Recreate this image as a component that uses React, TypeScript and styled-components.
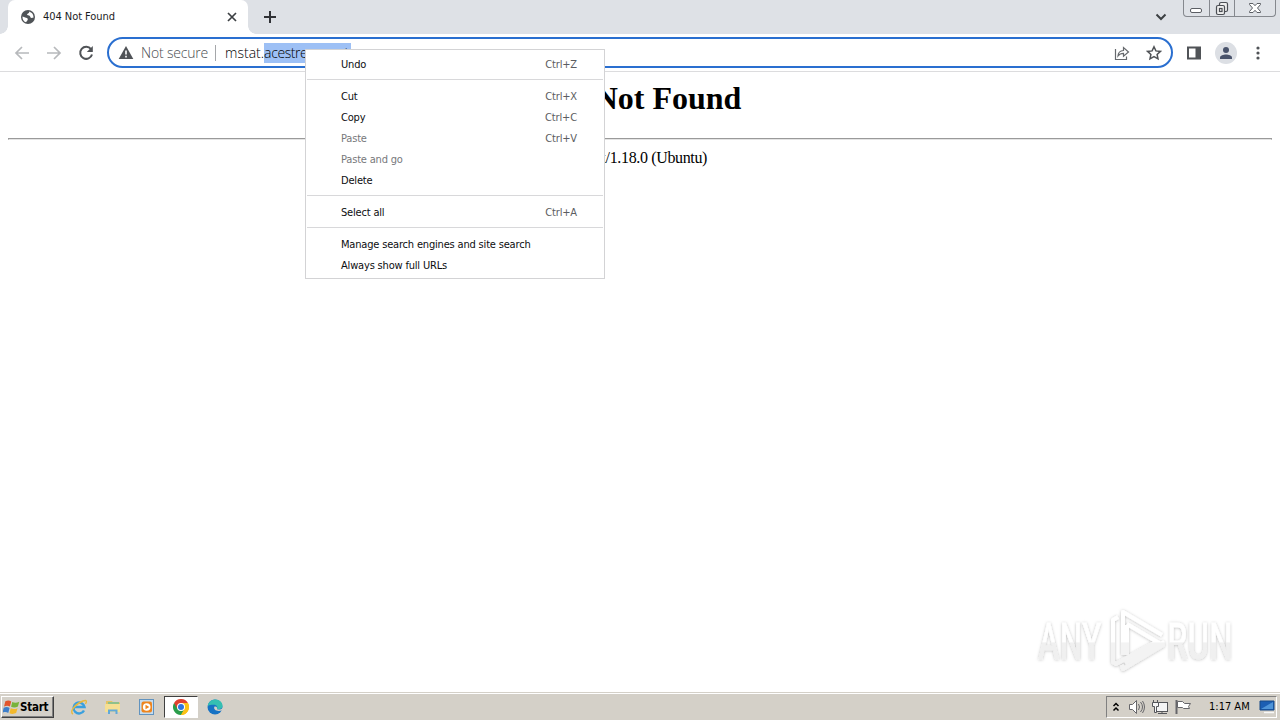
import React from 'react';
import styled, { createGlobalStyle } from 'styled-components';

const Global = createGlobalStyle`
  * { box-sizing: border-box; }
  html, body { margin: 0; padding: 0; }
  body { width: 1280px; height: 720px; overflow: hidden; background: #fff; }
  svg { display: block; flex: none; }
`;

const ui = `'DejaVu Sans Condensed', 'DejaVu Sans', sans-serif`;

const Desktop = styled.div`
  position: relative;
  display: flex;
  flex-direction: column;
  width: 1280px;
  height: 720px;
  overflow: hidden;
  font-family: ${ui};
  font-stretch: condensed;
  color: #1b1c1e;
`;

const TabStrip = styled.div`
  display: flex;
  align-items: flex-start;
  height: 34px;
  flex: none;
  padding-left: 8px;
  background: #dee1e6;
`;

const Tab = styled.div`
  position: relative;
  display: flex;
  align-items: center;
  width: 240px;
  height: 34px;
  padding: 0 10px 0 12px;
  background: #fff;
  border-radius: 7px 7px 0 0;
  &::before, &::after {
    content: '';
    position: absolute;
    bottom: 0;
    width: 8px;
    height: 8px;
  }
  &::before { left: -8px; background: radial-gradient(circle at 0 0, #dee1e6 7.5px, #fff 8px); }
  &::after { right: -8px; background: radial-gradient(circle at 100% 0, #dee1e6 7.5px, #fff 8px); }
`;

const Label = styled.span<{ $size?: number; $track?: number; $color?: string; $bold?: boolean }>`
  font-size: ${p => p.$size ?? 11}px;
  letter-spacing: ${p => p.$track ?? 0}px;
  color: ${p => p.$color ?? '#1b1c1e'};
  font-weight: ${p => (p.$bold ? 700 : 400)};
  line-height: 16px;
  white-space: nowrap;
`;

const TabTitle = styled(Label)`
  flex: 1;
  margin-left: 7px;
`;

const NewTab = styled.div`
  margin: 9px 0 0 14px;
`;

const TabSearch = styled.div`
  margin: 10px 15px 0 auto;
`;

const WindowButtons = styled.div`
  display: flex;
  width: 93px;
  height: 17px;
  margin-right: 4px;
  border: 1px solid #85888e;
  border-top: 0;
  border-radius: 0 0 4px 4px;
  background: #dfe2e7;
`;

const WindowButton = styled.div<{ $w: number }>`
  display: flex;
  justify-content: center;
  width: ${p => p.$w}px;
  & + & { border-left: 1px solid #85888e; }
`;

const Toolbar = styled.div`
  display: flex;
  align-items: center;
  height: 38px;
  flex: none;
  padding: 0 12px 0 12px;
  border-bottom: 1px solid #dcdcde;
  background: #fff;
`;

const NavGroup = styled.div`
  display: flex;
  gap: 12px;
  width: 95px;
`;

const Omnibox = styled.div`
  display: flex;
  align-items: center;
  width: 1066px;
  height: 31px;
  padding: 0 9px;
  border: 2px solid #2a6fd0;
  border-radius: 16px;
  background: #fff;
`;

const OmniText = styled.span<{ $color?: string; $track?: number }>`
  font-family: 'Open Sans', 'Noto Sans', sans-serif;
  font-weight: 300;
  font-stretch: normal;
  font-size: 14px;
  line-height: 20px;
  letter-spacing: ${p => p.$track ?? 0}px;
  color: ${p => p.$color ?? '#000'};
  white-space: nowrap;
`;

const Security = styled(OmniText)`
  margin-left: 7px;
`;

const Divider = styled.div`
  width: 1px;
  height: 16px;
  margin: 0 9px 0 7px;
  background: #a5a7aa;
`;

const Selection = styled(OmniText)`
  width: 87px;
  height: 20px;
  overflow: hidden;
  background: #9dc0f5;
`;

const OmniActions = styled.div`
  display: flex;
  gap: 16px;
  margin-left: auto;
`;

const RightActions = styled.div`
  display: flex;
  align-items: center;
  flex: 1;
  padding-left: 13px;
`;

const Avatar = styled.div`
  display: flex;
  align-items: center;
  justify-content: center;
  width: 22px;
  height: 22px;
  margin: 0 13px 0 13px;
  border-radius: 50%;
  background: #dcdfe4;
`;

const Page = styled.main`
  flex: 1;
  padding: 8px 8px 0;
  background: #fff;
  color: #000;
  font-family: 'Liberation Serif', 'Times New Roman', serif;
  font-size: 16px;
  text-align: center;
`;

const Heading = styled.h1`
  margin: 0 0 21px;
  font-size: 32px;
  line-height: 37px;
`;

const Rule = styled.hr`
  height: 2px;
  margin: 0 0 9px;
  border: 1px solid #9a9a9a;
  border-bottom-color: #e4e4e4;
`;

const Server = styled.div`
  padding-right: 2px;
  line-height: 18px;
  letter-spacing: -0.35px;
`;

const Menu = styled.div`
  position: absolute;
  left: 305px;
  top: 49px;
  width: 300px;
  height: 230px;
  padding: 4px 1px 0;
  border: 1px solid #d3d3d5;
  background: #fff;
`;

const MenuRow = styled.div`
  display: flex;
  align-items: center;
  justify-content: space-between;
  height: 21px;
  padding: 0 26px 0 34px;
`;

const MenuLine = styled.div`
  height: 1px;
  margin: 4px 0 6px;
  background: #d8d8da;
`;

const Watermark = styled.div`
  position: absolute;
  left: 1030px;
  top: 600px;
`;

const Taskbar = styled.footer`
  display: flex;
  align-items: center;
  height: 28px;
  flex: none;
  padding: 1px 3px 0 1px;
  border-top: 1px solid #d4d0c8;
  box-shadow: inset 0 1px #fff;
  background: #d4d0c8;
`;

const StartButton = styled.div`
  display: flex;
  align-items: center;
  width: 53px;
  height: 22px;
  padding-left: 1px;
  border: 1px solid;
  border-color: #fff #404040 #404040 #fff;
  box-shadow: inset -1px -1px #808080;
`;

const Launchers = styled.div`
  display: flex;
  align-items: center;
  margin-left: 8px;
`;

const Launcher = styled.div<{ $active?: boolean }>`
  display: flex;
  align-items: center;
  justify-content: center;
  width: 34px;
  height: 22px;
  background: ${p => (p.$active ? '#fff' : 'transparent')};
  border: 1px solid;
  border-color: ${p => (p.$active ? '#404040 #fff #fff #404040' : 'transparent')};
`;

const Tray = styled.div`
  display: flex;
  align-items: center;
  width: 171px;
  height: 22px;
  margin-left: auto;
  padding-left: 5px;
  border: 1px solid;
  border-color: #808080 #fff #fff #808080;
`;

const Clock = styled(Label)`
  margin: 0 9px 0 15px;
`;

type Item = { text: string; keys?: string; off?: boolean };
const groups: Item[][] = [
  [{ text: 'Undo', keys: 'Ctrl+Z' }],
  [
    { text: 'Cut', keys: 'Ctrl+X' },
    { text: 'Copy', keys: 'Ctrl+C' },
    { text: 'Paste', keys: 'Ctrl+V', off: true },
    { text: 'Paste and go', off: true },
    { text: 'Delete' },
  ],
  [{ text: 'Select all', keys: 'Ctrl+A' }],
  [{ text: 'Manage search engines and site search' }, { text: 'Always show full URLs' }],
];

const Globe = () => (
  <svg width="16" height="16" viewBox="0 0 16 16">
    <circle cx="8" cy="8" r="7" fill="#4f5357" />
    <path d="M2.5 7.5L6 8.8c1.600.3 2 1 1.700 2.200L6 13.300C3.500 12.500 2.200 10 2.500 7.500zM9 2.500c.6 1-.2 1.900-1.300 2.200-1 .3-.6 1.500.3 1.600 1.800.1 2.200 1 2.400 2 .5 1 1.600.4 3 .5.5-3-1.500-5.500-4.400-6.300z" fill="#fff" />
  </svg>
);

const Arrow = ({ flip }: { flip?: boolean }) => (
  <svg width="20" height="20" viewBox="0 0 20 20" fill="none" stroke="#b7b9bc" strokeWidth="1.7">
    <path d={flip ? 'M3 10h13M10 4l6 6-6 6' : 'M17 10H4M10 4l-6 6 6 6'} />
  </svg>
);

const Logo = () => (
  <svg width="220" height="84" viewBox="0 0 220 84">
    <defs>
      <linearGradient id="fade" gradientUnits="userSpaceOnUse" x1="0" y1="0" x2="0" y2="84">
        <stop offset=".5" stopColor="#fff" />
        <stop offset=".51" stopColor="#f3f3f3" />
      </linearGradient>
      <linearGradient id="fadeText" gradientUnits="userSpaceOnUse" x1="0" y1="-59" x2="0" y2="25">
        <stop offset=".5" stopColor="#fff" />
        <stop offset=".51" stopColor="#f0f0f0" />
      </linearGradient>
      <filter id="glow" x="-10%" y="-10%" width="120%" height="120%">
        <feDropShadow dx="0" dy="0.500" stdDeviation="1.800" floodColor="#000" floodOpacity=".27" />
      </filter>
    </defs>
    <g filter="url(#glow)">
      <g fontFamily="Roboto, sans-serif" fontWeight="400" fontSize="50" fill="url(#fadeText)" stroke="url(#fadeText)" strokeWidth=".5">
        <text transform="translate(8 59) scale(.64 1)" textLength="99" lengthAdjust="spacingAndGlyphs">ANY</text>
        <text transform="translate(137 59) scale(.64 1)" textLength="103" lengthAdjust="spacingAndGlyphs">RUN</text>
      </g>
      <g fill="none" stroke="url(#fade)" strokeWidth="4" strokeLinejoin="round">
        <path d="M88 17l-5 3v42l3 2 40-22" />
        <path d="M93 55V12l39 23" />
        <path d="M97 25v30M97 24l32 19-34 20M132 41l1 4-40 24-1-4" />
      </g>
    </g>
  </svg>
);

export default function App() {
  return (
    <>
      <Global />
      <Desktop>
        <TabStrip>
          <Tab>
            <Globe />
            <TabTitle $track={-0.05}>404 Not Found</TabTitle>
            <svg width="12" height="12" viewBox="0 0 12 12" stroke="#3c4043" strokeWidth="1.700"><path d="M2 2l8 8M10 2l-8 8" /></svg>
          </Tab>
          <NewTab>
            <svg width="16" height="16" viewBox="0 0 16 16" stroke="#303236" strokeWidth="2"><path d="M8 2v12M2 8h12" /></svg>
          </NewTab>
          <TabSearch>
            <svg width="14" height="14" viewBox="0 0 14 14" fill="none" stroke="#3c4043" strokeWidth="2"><path d="M2.500 4.500L7 9l4.500-4.500" /></svg>
          </TabSearch>
          <WindowButtons>
            <WindowButton $w={25}>
              <svg width="14" height="16" fill="#fff" stroke="#5b5e64"><rect x="1.500" y="8.500" width="11" height="4" rx="1.500" /></svg>
            </WindowButton>
            <WindowButton $w={26}>
              <svg width="14" height="16" fill="#eee" stroke="#4b4e54" strokeWidth="1.200"><rect x="4.500" y="2.500" width="8" height="9" rx="1.500" /><rect x="1.500" y="5.500" width="8" height="9" rx="1.500" /><rect x="4.500" y="8.500" width="2.500" height="3" /></svg>
            </WindowButton>
            <WindowButton $w={41}>
              <svg width="14" height="16" fill="#fff" stroke="#5b5e64"><path d="M1.500 3.500h3.500l2 2.200 2-2.200h3.500v1L9.500 8l3 3.500v1H9L7 10.300 5 12.500H1.500v-1l3-3.500-3-3.500z" /></svg>
            </WindowButton>
          </WindowButtons>
        </TabStrip>

        <Toolbar>
          <NavGroup>
            <Arrow />
            <Arrow flip />
            <svg width="20" height="20" viewBox="0 0 20 20" fill="none" stroke="#505357" strokeWidth="2"><path d="M15 6.200A6 6 0 1 0 16 11.500" /><path d="M16.800 3v6h-6z" fill="#505357" stroke="none" /></svg>
          </NavGroup>
          <Omnibox>
            <svg width="16" height="16" viewBox="0 0 16 16"><path d="M8 1l7.300 13H.7z" fill="#505357" /><path d="M8 5.500v4M8 10.800v1.700" stroke="#fff" strokeWidth="1.600" /></svg>
            <Security $color="#4a4d51" $track={-0.18}>Not secure</Security>
            <Divider />
            <OmniText>mstat.</OmniText>
            <Selection $track={-0.4}>acestream.net</Selection>
            <OmniActions>
              <svg width="16" height="16" viewBox="0 0 16 16" fill="none" stroke="#66696d" strokeWidth="1.200"><path d="M1.500 4v10.500h11v-3M4 11c.2-3.500 2-5.300 5.500-5.500V2.500L14.500 7l-5 4.300V8.400C7 8.400 5.300 9.200 4 11z" /></svg>
              <svg width="16" height="16" viewBox="0 0 16 16" fill="none" stroke="#505357" strokeWidth="1.500"><path d="M8 1.800l1.900 4.100 4.500.5-3.300 3 .9 4.400L8 11.600l-4 2.200.9-4.400-3.300-3 4.500-.5z" /></svg>
            </OmniActions>
          </Omnibox>
          <RightActions>
            <svg width="16" height="16" viewBox="0 0 16 16"><path d="M1 1.500h14v13H1z" fill="#505357" /><path d="M3 3.500h6.500v9H3z" fill="#fff" /></svg>
            <Avatar>
              <svg width="14" height="14" viewBox="0 0 14 14" fill="#49536b"><circle cx="7" cy="4" r="3" /><path d="M1 13v-1.500C1 9.500 4.500 8.500 7 8.500s6 1 6 3V13z" /></svg>
            </Avatar>
            <svg width="16" height="16" fill="#505357"><circle cx="8" cy="3" r="1.600" /><circle cx="8" cy="8" r="1.600" /><circle cx="8" cy="13" r="1.600" /></svg>
          </RightActions>
        </Toolbar>

        <Page>
          <Heading>404 Not Found</Heading>
          <Rule />
          <Server>nginx/1.18.0 (Ubuntu)</Server>
        </Page>

        <Taskbar>
          <StartButton>
            <svg width="17" height="17" viewBox="1 1 14.500 13.500">
              <path d="M3 2.500c2-1 3.500-.8 5 .1L6.900 7C5.400 6 3.900 6 1.900 6.800z" fill="#e2552b" />
              <path d="M8.900 3c1.900.9 3.700.8 6-.2L13.700 7c-2 1-3.900 1-5.800.2z" fill="#78b33c" />
              <path d="M1.600 7.900c2-.9 3.500-.7 5 .2L5.500 12.400c-1.500-1-3-1-5-.2z" fill="#3d7ec9" />
              <path d="M7.600 8.400c2 .9 3.800.8 5.800-.1l-1.200 4.200c-2 .9-3.900.9-5.700.1z" fill="#f3b92c" />
            </svg>
            <Label $bold $color="#000" $size={11.5} $track={-0.25}>Start</Label>
          </StartButton>
          <Launchers>
            <Launcher>
              <svg width="18" height="18" viewBox="0 0 18 18" fill="none"><path d="M14 12.500A5.500 5.500 0 1 1 14.500 9H5" stroke="#3aa0de" strokeWidth="2.400" /><path d="M3 16C-1 14 5 6 13 3c4-1.500 4 .5 2.500 3" stroke="#e9b93c" strokeWidth="1.400" /></svg>
            </Launcher>
            <Launcher>
              <svg width="18" height="18" viewBox="0 0 18 18"><path d="M2 3h6l1 1.500h7V14H2z" fill="#e5c464" /><path d="M4 4h11v3H4z" fill="#8fc08a" /><path d="M1 6h15v8H1z" fill="#f5df93" /><path d="M4 16v-4.500h9.500V16h-2v-2.500H6V16z" fill="#62a9d8" /></svg>
            </Launcher>
            <Launcher>
              <svg width="18" height="18" viewBox="0 0 18 18"><rect x="1.500" y="1.500" width="14" height="15" fill="#c5dcef" stroke="#6193bf" /><rect x="3.500" y="3.500" width="10.500" height="11" rx="2" fill="#ee851e" /><circle cx="8.700" cy="9" r="3.800" fill="#fff" /><path d="M7.500 6.700v4.600L11.300 9z" fill="#ee851e" /></svg>
            </Launcher>
            <Launcher $active>
              <svg width="16" height="16" viewBox="0 0 16 16"><path d="M8 8L14.930 4A8 8 0 0 1 8 16z" fill="#fbc116" /><path d="M8 16A8 8 0 0 1 1.070 4L8 8l3.500 2z" fill="#2a9d4b" /><path d="M8 4h6.930A8 8 0 0 1 8 16l3.500-6z" fill="#fbc116" /><path d="M1.070 4a8 8 0 0 1 13.860 0H8L4.500 10z" fill="#e1412f" /><circle cx="8" cy="8" r="4" fill="#fff" /><circle cx="8" cy="8" r="3" fill="#2e75df" /></svg>
            </Launcher>
            <Launcher>
              <svg width="16" height="16" viewBox="0 0 16 16"><circle cx="8" cy="8" r="7.500" fill="#1672c4" /><path d="M.7 7C1.500 2.500 5 .5 8.500.5c5 0 7.500 4 7 7-.4 2.500-3.500 3.300-5.500 2.500 1-2-.3-4.300-3-4.300C4 5.700 1.500 6 .7 7z" fill="#35bfb2" /><path d="M7.500 7.500c-1.500 3 2 5.500 7.500 4l1-1.500v-1.500c-2 2.500-5 2.500-6 1.500.5-1 0-3-2.500-2.500z" fill="#d4d0c8" /></svg>
            </Launcher>
          </Launchers>
          <Tray>
            <svg width="8" height="12" fill="none" stroke="#000" strokeWidth="1.500"><path d="M1.500 5L4 2.500 6.500 5M1.500 9.500L4 7l2.500 2.500" /></svg>
            <svg width="26" height="18" fill="#fff" stroke="#66666a"><path d="M9.500 6.500h3l4-4v13l-4-4h-3z" /><path d="M18.500 6q2 3 0 6M20.500 4q4 5 0 10M22.500 3q4 6 0 12" fill="none" /></svg>
            <svg width="24" height="18" fill="#f5f5f5" stroke="#55565a"><rect x="9.500" y="4.500" width="12" height="9" /><path d="M12 15.500h9M16 13v2" /><path d="M7.500 2v3M11.500 2v3M6.500 4.500h6v4h-2v6h-2v-6h-2z" /></svg>
            <svg width="24" height="18" fill="#fff" stroke="#66666a"><path d="M6.500 2v14" strokeWidth="2" /><path d="M7.500 3.500h5l2 2h6l-2 3 1 2h-6l-1-1h-5z" /></svg>
            <Clock $color="#000">1:17 AM</Clock>
            <svg width="16" height="16" viewBox="0 0 16 16"><path d="M1 2h14v9H1z" fill="#1c5eb3" stroke="#174986" /><path d="M2 10L14 3v7z" fill="#4f94d8" /><path d="M5 13.500h10" stroke="#f7f7f7" strokeWidth="1.500" /></svg>
          </Tray>
        </Taskbar>

        <Watermark><Logo /></Watermark>

        <Menu>
          {groups.map((items, i) => (
            <React.Fragment key={i}>
              {i > 0 && <MenuLine />}
              {items.map(it => (
                <MenuRow key={it.text}>
                  <Label $track={-0.18} $color={it.off ? '#77787b' : '#0c0d0f'}>{it.text}</Label>
                  {it.keys && <Label $track={-0.15} $color="#5b5d61">{it.keys}</Label>}
                </MenuRow>
              ))}
            </React.Fragment>
          ))}
        </Menu>
      </Desktop>
    </>
  );
}
